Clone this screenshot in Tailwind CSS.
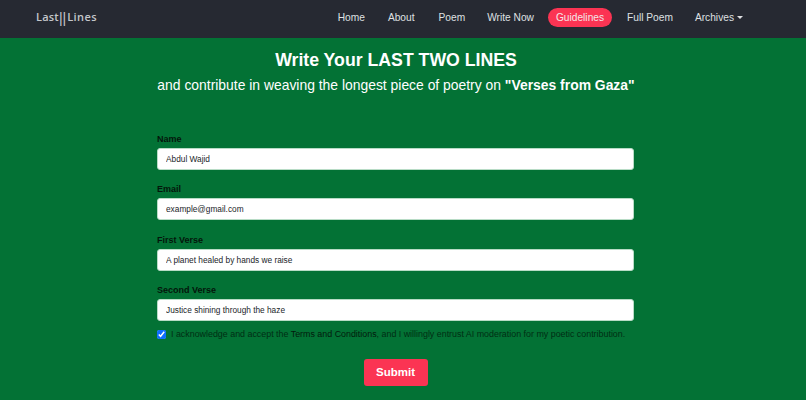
<!DOCTYPE html>
<html lang="en">

    <head>
        <meta charset="UTF-8">
        <meta name="viewport" content="width=device-width, initial-scale=1.0">
        <script src="https://cdn.jsdelivr.net/npm/@tailwindcss/browser@4"></script>
        <title>Last Lines</title>
    </head>

    <body class="h-[400px] overflow-hidden bg-[#037235] font-['Liberation_Sans',Arial,sans-serif]">
        <nav class="h-[38px] bg-[#262932] flex items-center pb-[3px] pl-[36px] pr-[63px]">
            <a href="#" class="flex items-center font-['Open_Sans',sans-serif] text-[11px] font-semibold text-[#c4c6ca]"><span class="tracking-[0.2px]">Last</span><span class="font-['Liberation_Sans',sans-serif] text-[14px] leading-[14px] font-normal">||</span><span class="tracking-[0.4px] ml-[1px]">Lines</span></a>
            <ul class="ml-auto flex items-center text-[10.2px] text-[#dfe0e2]">
                <li><a href="#">Home</a></li>
                <li class="ml-[23px]"><a href="#">About</a></li>
                <li class="ml-[24px]"><a href="#">Poem</a></li>
                <li class="ml-[22px]"><a href="#">Write Now</a></li>
                <li class="ml-[14px]"><a href="#" class="block h-[19px] leading-[19px] px-[8px] rounded-full bg-[#fb3453] text-[#f4e6e8]">Guidelines</a></li>
                <li class="ml-[15px]"><a href="#">Full Poem</a></li>
                <li class="ml-[22px] flex items-center"><a href="#">Archives</a><span class="ml-[3px] w-0 h-0 border-x-[3px] border-x-transparent border-t-[3px] border-t-[#dfe0e2]"></span></li>
            </ul>
        </nav>

        <div class="text-center text-white pr-[14px]">
            <h1 class="mt-[11px] text-[17.7px] leading-[22px] font-bold">Write Your LAST TWO LINES</h1>
            <p class="mt-[4px] text-[13.9px] leading-[20px]">and contribute in weaving the longest piece of poetry on <b>"Verses from Gaza"</b></p>
        </div>

        <form class="w-[477px] ml-[157px] mt-[37px] text-[9px]">
            <div class="h-[50.3px]">
                <label class="block h-[16px] leading-[14px] font-bold text-[#04150b]">Name</label>
                <input type="text" value="Abdul Wajid" class="block w-full h-[22px] px-[8px] bg-white rounded-[3px] border border-[#b8dcc6] text-[#212529] text-[8.3px]">
            </div>
            <div class="h-[50.3px]">
                <label class="block h-[16px] leading-[14px] font-bold text-[#04150b]">Email</label>
                <input type="text" value="example@gmail.com" class="block w-full h-[22px] px-[8px] bg-white rounded-[3px] border border-[#b8dcc6] text-[#212529] text-[8.3px]">
            </div>
            <div class="h-[50.3px]">
                <label class="block h-[16px] leading-[14px] font-bold text-[#04150b]">First Verse</label>
                <input type="text" value="A planet healed by hands we raise" class="block w-full h-[22px] px-[8px] bg-white rounded-[3px] border border-[#b8dcc6] text-[#212529] text-[8.3px]">
            </div>
            <div class="h-[50.3px]">
                <label class="block h-[16px] leading-[14px] font-bold text-[#04150b]">Second Verse</label>
                <input type="text" value="Justice shining through the haze" class="block w-full h-[22px] px-[8px] bg-white rounded-[3px] border border-[#b8dcc6] text-[#212529] text-[8.3px]">
            </div>
            <div class="-mt-[7px] flex items-center h-[16px]">
                <input type="checkbox" checked class="w-[9px] h-[9px] m-0 accent-[#0d6efd]">
                <span class="ml-[5px] text-[8.9px] text-[#012e14]">I acknowledge and accept the <span class="text-[#021a0c]">Terms and Conditions</span>, and I willingly entrust AI moderation for my poetic contribution.</span>
            </div>
            <div class="mt-[17px] flex justify-center">
                <button type="button" class="w-[64px] h-[27px] rounded-[3px] bg-[#fb3453] text-white text-[11.5px] font-bold">Submit</button>
            </div>
        </form>
    </body>

</html>
